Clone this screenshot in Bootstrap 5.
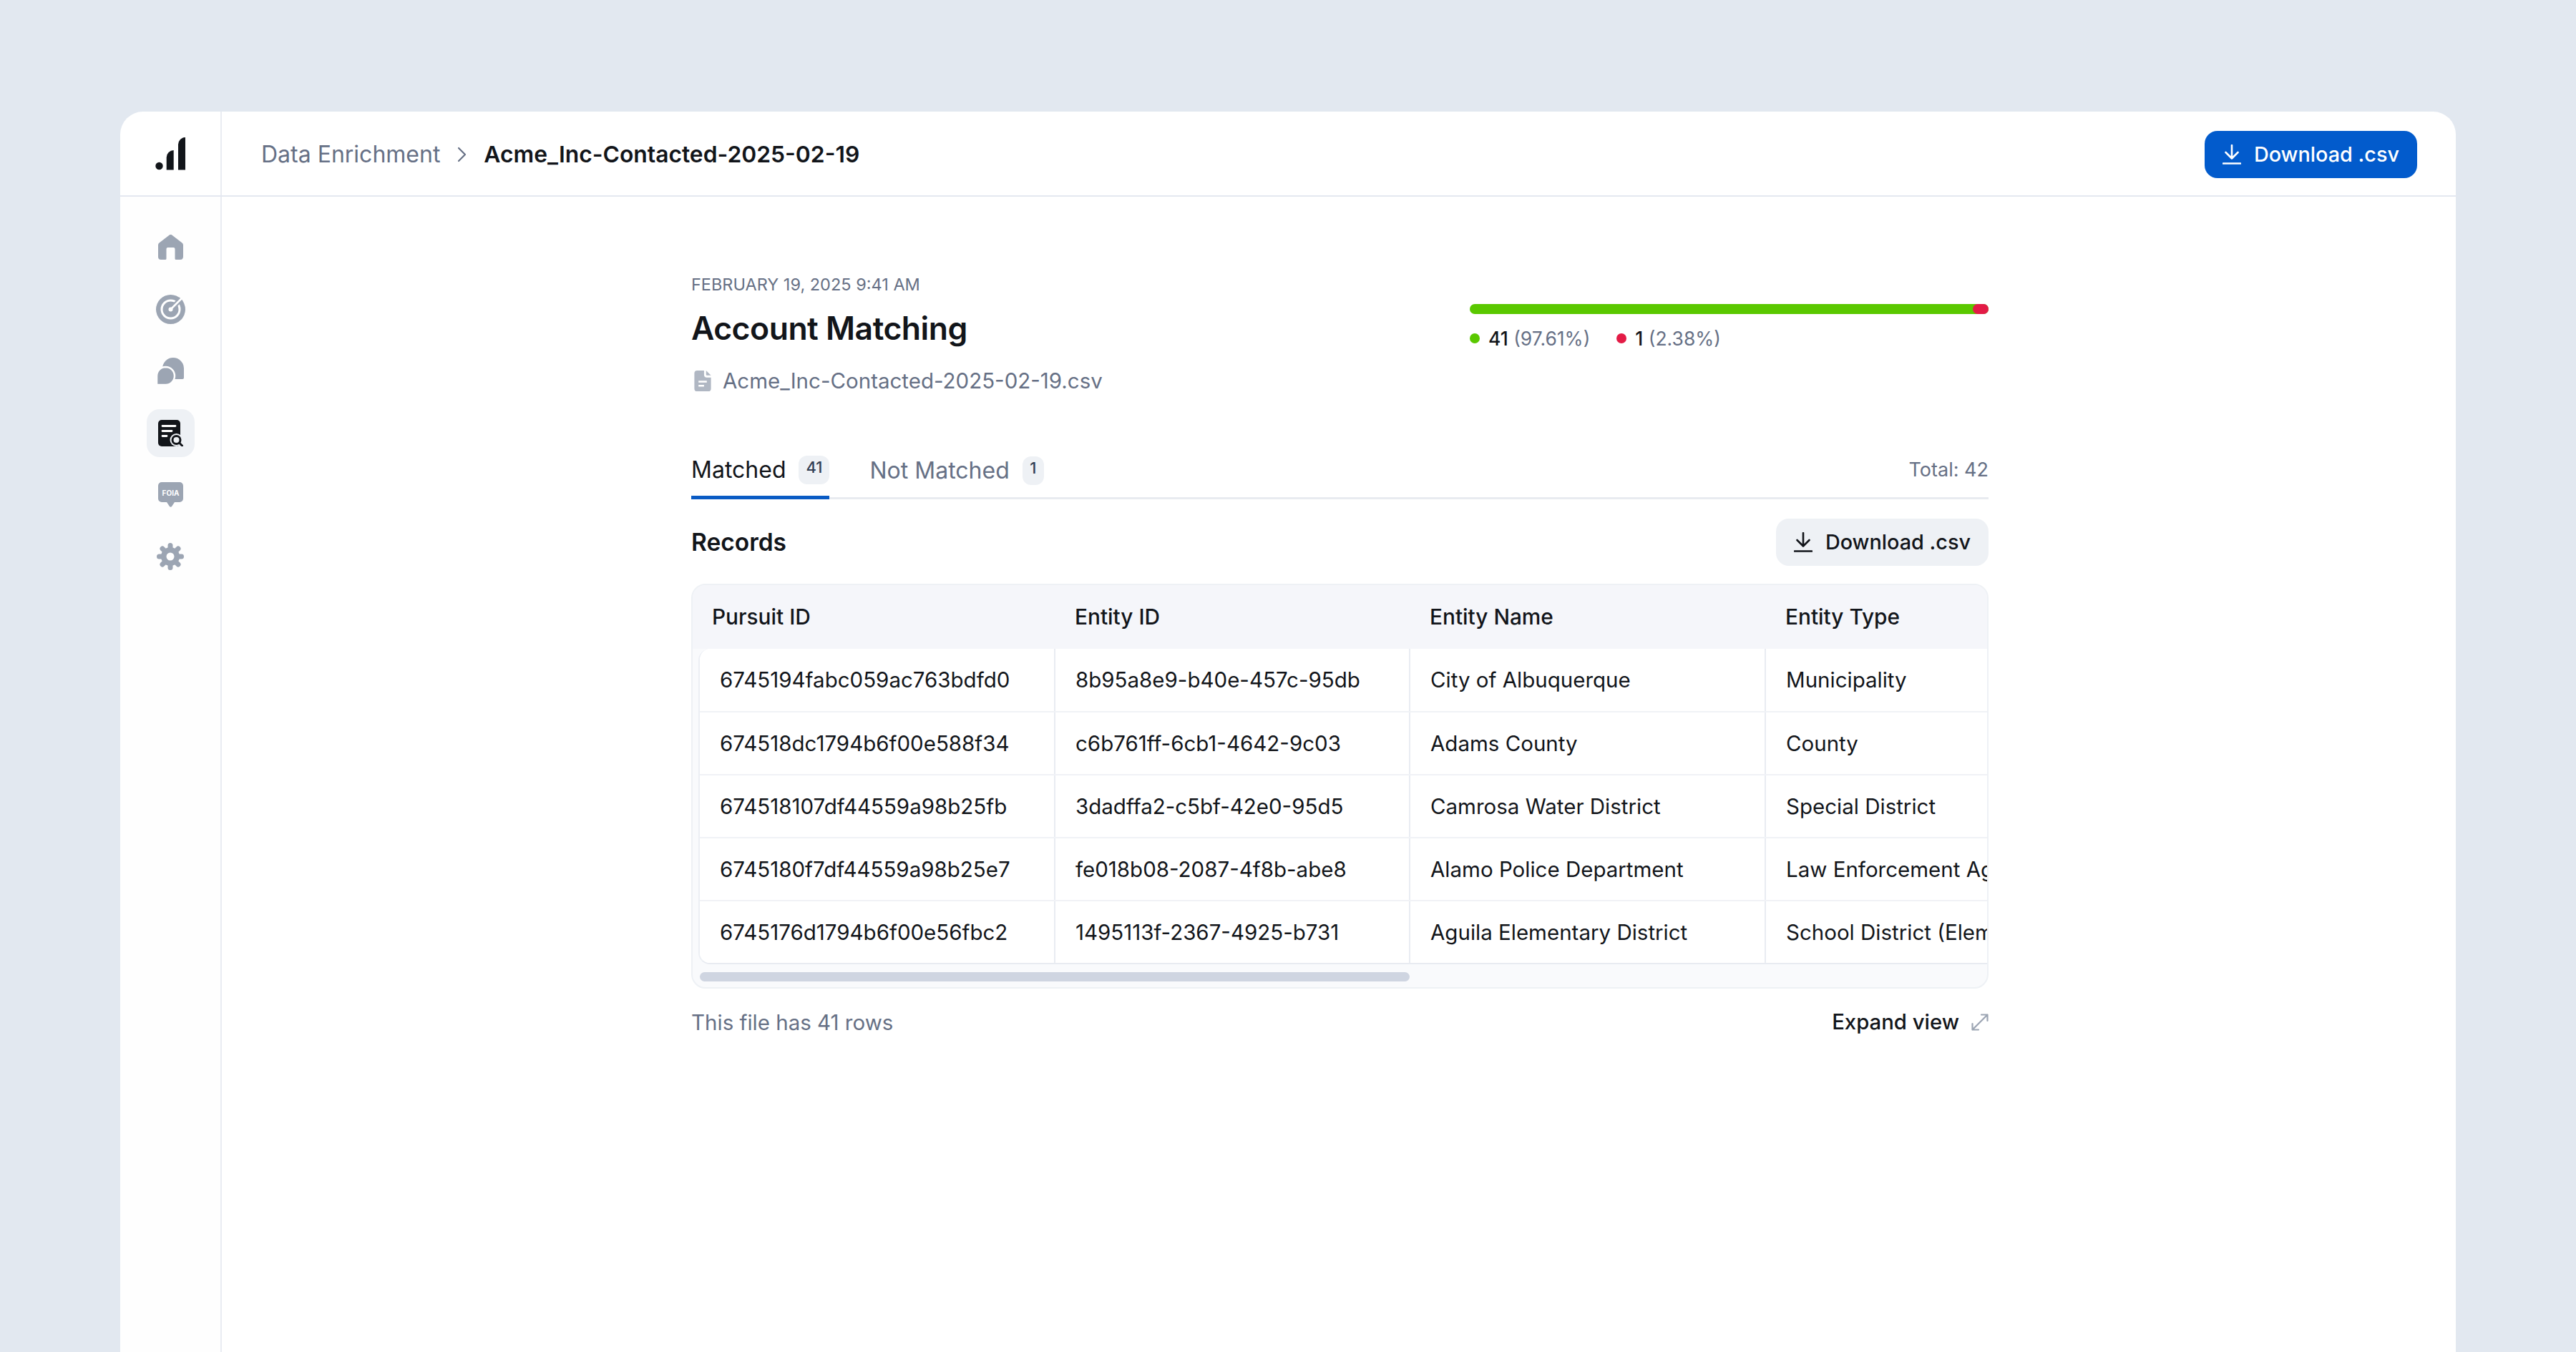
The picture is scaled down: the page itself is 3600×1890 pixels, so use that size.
<!doctype html>
<html lang="en">
<head>
<meta charset="utf-8">
<title>Account Matching</title>
<link href="https://cdn.jsdelivr.net/npm/bootstrap@5.3.0/dist/css/bootstrap.min.css" rel="stylesheet">
<style>
html,body{height:100%;overflow:hidden}
body{background:#e2e8f0;font-family:"Inter","Liberation Sans",sans-serif;font-size:29.5px;color:#12151a;padding:156px 168px 0}
.shell{background:#fff;border-radius:32px 32px 0 0;height:1734px;overflow:hidden}
.topbar{height:119px;border-bottom:2px solid #e4e8f0}
.logo-cell{width:142px;border-right:2px solid #e9ecf2}
.crumbs{padding:3px 54px 0 55px;font-size:32px}
.crumb-muted{color:#667085;font-weight:400}
.crumb-cur{font-weight:600;color:#12151a;font-size:31.800px}
.crumb-chev{margin:0 24px}
.btn-dl{height:66px;padding:0 25px;border-radius:18px;font-size:28.800px;font-weight:500;display:inline-flex;align-items:center;gap:18px;border:0}
.btn-pri{background:#025bcc;color:#fff}
.btn-pri:hover{background:#025bcc;color:#fff}
.btn-sec{background:#eef1f5;color:#12151a}
.side{width:142px;border-right:2px solid #e9ecf2;padding-top:37px;gap:19.6px;background:#fefefe}
.side-btn{width:67px;height:67px;border-radius:18px}
.side-on{background:#eef1f5}
.pane{width:1813px;padding-top:108px;margin-left:3px}
.eyebrow{font-size:23.5px;color:#667085;line-height:30px;letter-spacing:0}
.title{font-size:44.5px;font-weight:600;line-height:56px;margin:18px 0 0;letter-spacing:-.5px}
.fileline{color:#667085;gap:16px;margin-top:25px;line-height:40px}
.bar-wrap{width:725px;padding-top:42px}
.seg-bar{height:14px;background:#5ac800;border-radius:7px}
.seg-red{width:22px;background:#e31b46;border-radius:7px}
.legend{font-size:26.500px;margin-top:17px;gap:37px;line-height:34px}
.legend .fw-medium{font-weight:500}
.dot{width:14px;height:14px;border-radius:50%}
.dot-g{background:#5ac800}
.dot-r{background:#e31b46}
.dim{color:#667085}
.tabbar{margin-top:74px;height:72px;border-bottom:3px solid #e8ebf0;font-size:32px}
.tab-item{height:72px;margin-right:56px;color:#667085;margin-bottom:-3px;padding-bottom:8px;gap:18px}
.tab-on{color:#12151a;border-bottom:5px solid #0a5bc4;padding-bottom:6px}
.pill-n{background:#eef1f5;border-radius:12px;font-size:22px;font-weight:500;color:#344054;height:40px;min-width:30px;padding:0 10px 7px;display:flex;align-items:center;justify-content:center}
.tot{font-size:27px;color:#667085;padding-bottom:6px}
.rec-head{margin-top:26px;height:68px}
.rec-title{font-size:33.500px;font-weight:600}
.tbl-box{margin-top:24px;height:566px;background:#f9fafc;border:2px solid #eef1f5;border-radius:20px;overflow:hidden}
.tbl-head{background:#f5f6fa;height:89px}
.hcell{font-weight:500;padding-left:27px;flex:none;font-size:29.8px}
.tb-body{margin-left:8px;border-left:2px solid #eceff4;border-bottom:2px solid #e8ebf1;background:#fff;border-radius:16px 0 0 16px;overflow:hidden;height:441px}
.tb-body .table{margin:0;width:2400px;table-layout:fixed;--bs-table-bg:#fff;--bs-table-color:#12151a}
.tb-body td{font-size:29.5px;height:88px;padding:0 28px;vertical-align:middle;white-space:nowrap;border-bottom:2px solid #f0f2f6;border-right:2px solid #e9ecf2;overflow:hidden}
.tb-body tr:last-child td{border-bottom:0}
.w-a{width:496px}
.w-b{width:496px}
.w-c{width:497px}
.w-d{width:911px}
.h-a{width:507px}
.scroll-track{padding:11px 0 0 10px}
.scroll-thumb{width:992px;height:13px;border-radius:7px;background:#cfd5e1}
.foot{margin-top:20px;line-height:54px}
.expand{font-weight:500;gap:17px;font-size:29.3px}
.foot-left{color:#667085}
</style>
</head>
<body>
<div class="shell d-flex flex-column">
  <header class="topbar d-flex align-items-stretch flex-shrink-0">
    <div class="logo-cell d-flex align-items-center justify-content-center">
      <svg width="42" height="46" viewBox="0 0 42 46" fill="#12151a"><circle cx="5.500" cy="40" r="5.200"/><path d="M15.700 45.500V28a10 10 0 0 1 10-10v27.500z"/><path d="M32 45.500V10A10 10 0 0 1 42 0v45.500z"/></svg>
    </div>
    <div class="crumbs flex-grow-1 d-flex align-items-center justify-content-between">
      <div class="d-flex align-items-center">
        <span class="crumb-muted">Data Enrichment</span>
        <svg class="crumb-chev" width="13" height="22" viewBox="0 0 13 22" fill="none" stroke="#667085" stroke-width="2.200" stroke-linecap="round" stroke-linejoin="round"><path d="M2 2l9 9-9 9"/></svg>
        <span class="crumb-cur">Acme_Inc-Contacted-2025-02-19</span>
      </div>
      <button type="button" class="btn btn-dl btn-pri">
        <svg width="26" height="28" viewBox="0 0 26 28" fill="none" stroke="currentColor" stroke-width="2.600" stroke-linecap="round" stroke-linejoin="round"><path d="M13 1v18M4.500 11l8.500 8.500L21.500 11M1 26.500h24"/></svg>
        Download .csv
      </button>
    </div>
  </header>
  <div class="d-flex flex-grow-1">
    <nav class="side d-flex flex-column align-items-center flex-shrink-0">
      <a class="side-btn d-flex align-items-center justify-content-center" href="#" aria-label="Home">
        <svg width="35" height="35" viewBox="0 0 35 35" fill="#9ca5b3"><path d="M15.800.6a2.500 2.500 0 0 1 3.400 0L33.500 11.500a4 4 0 0 1 1.500 3V31a4 4 0 0 1-4 4H25a1.500 1.500 0 0 1-1.500-1.500V20a2 2 0 0 0-2-2H13.500a2 2 0 0 0-2 2V33.500A1.500 1.500 0 0 1 10 35H4a4 4 0 0 1-4-4V14.500a4 4 0 0 1 1.500-3z"/></svg>
      </a>
      <a class="side-btn d-flex align-items-center justify-content-center" href="#" aria-label="Radar">
        <svg width="41" height="41" viewBox="0 0 41 41" fill="none"><circle cx="20.500" cy="20.500" r="20.500" fill="#9ca5b3"/><circle cx="20.500" cy="20.500" r="12.500" stroke="#fff" stroke-width="3"/><path d="M20.500 20.500L35 6" stroke="#9ca5b3" stroke-width="7"/><path d="M20.500 20.500L35 6" stroke="#fff" stroke-width="2.600" stroke-linecap="round"/><circle cx="20.500" cy="20.500" r="3" fill="#fff"/></svg>
      </a>
      <a class="side-btn d-flex align-items-center justify-content-center" href="#" aria-label="Chat">
        <svg width="38" height="38" viewBox="0 0 38 38" fill="#9ca5b3"><path d="M23 0a15 15 0 0 1 15 15v13a2 2 0 0 1-2 2H23A15 15 0 0 1 23 0z"/><path d="M12.500 14a12.500 12.500 0 0 1 0 25H1.500a1.500 1.500 0 0 1-1.500-1.500V26.500A12.500 12.500 0 0 1 12.500 14z" stroke="#fff" stroke-width="2.500" transform="translate(0 -1)"/></svg>
      </a>
      <a class="side-btn side-on d-flex align-items-center justify-content-center" href="#" aria-label="Enrichment">
        <svg width="35" height="37" viewBox="0 0 35 37" fill="none"><rect width="31" height="37" rx="5" fill="#12151a"/><path d="M6 8.500h18M6 15.500h13M6 22.500h6" stroke="#fff" stroke-width="2.800" stroke-linecap="round"/><circle cx="25.500" cy="28" r="9" fill="#eef1f5"/><circle cx="25.500" cy="28" r="5.500" fill="#eef1f5" stroke="#12151a" stroke-width="3"/><path d="M29.500 32l4.500 4.500" stroke="#12151a" stroke-width="3" stroke-linecap="round"/></svg>
      </a>
      <a class="side-btn d-flex align-items-center justify-content-center" href="#" aria-label="FOIA">
        <svg width="35" height="35" viewBox="0 0 35 35"><path d="M5 0h25a5 5 0 0 1 5 5v18a5 5 0 0 1-5 5h-7l-4 6a1.800 1.800 0 0 1-3 0l-4-6H5a5 5 0 0 1-5-5V5a5 5 0 0 1 5-5z" fill="#9ca5b3"/><text x="17.500" y="18.500" text-anchor="middle" font-family="Inter,sans-serif" font-size="10" font-weight="700" fill="#fff">FOIA</text></svg>
      </a>
      <a class="side-btn d-flex align-items-center justify-content-center" href="#" aria-label="Settings">
        <svg width="38" height="38" viewBox="0 0 38 38" fill="none"><g stroke="#9ca5b3" stroke-width="7" stroke-linecap="round"><path d="M19 3.500v31M3.500 19h31M8 8l22 22M30 8L8 30"/></g><circle cx="19" cy="19" r="13" fill="#9ca5b3"/><circle cx="19" cy="19" r="5.500" fill="#fff"/></svg>
      </a>
    </nav>
    <main class="flex-grow-1 d-flex justify-content-center">
      <div class="pane">
        <div class="d-flex justify-content-between">
          <div>
            <div class="eyebrow text-uppercase">February 19, 2025 9:41 AM</div>
            <h1 class="title">Account Matching</h1>
            <div class="fileline d-flex align-items-center">
              <svg class="ms-1" width="24" height="29" viewBox="0 0 24 30" fill="#b0b7c3"><path d="M4 0h10v6a4 4 0 0 0 4 4h6v16a4 4 0 0 1-4 4H4a4 4 0 0 1-4-4V4a4 4 0 0 1 4-4z"/><path d="M17 0l7 7h-6a1 1 0 0 1-1-1z"/><path d="M6 16h12M6 22h8" stroke="#fff" stroke-width="2.500"/></svg>
              <span>Acme_Inc-Contacted-2025-02-19.csv</span>
            </div>
          </div>
          <div class="bar-wrap">
            <div class="seg-bar d-flex justify-content-end"><div class="seg-red"></div></div>
            <div class="legend d-flex">
              <div class="d-flex align-items-center gap-2"><span class="dot dot-g me-1"></span><span><span class="fw-medium">41</span> <span class="dim">(97.61%)</span></span></div>
              <div class="d-flex align-items-center gap-2"><span class="dot dot-r me-1"></span><span><span class="fw-medium">1</span> <span class="dim">(2.38%)</span></span></div>
            </div>
          </div>
        </div>
        <div class="tabbar d-flex align-items-end">
          <div class="tab-item tab-on d-flex align-items-center">Matched <span class="pill-n">41</span></div>
          <div class="tab-item d-flex align-items-center">Not Matched <span class="pill-n">1</span></div>
          <div class="tot ms-auto align-self-center">Total: 42</div>
        </div>
        <div class="rec-head d-flex align-items-center justify-content-between">
          <div class="rec-title">Records</div>
          <button type="button" class="btn btn-dl btn-sec">
            <svg width="26" height="28" viewBox="0 0 26 28" fill="none" stroke="currentColor" stroke-width="2.600" stroke-linecap="round" stroke-linejoin="round"><path d="M13 1v18M4.500 11l8.500 8.500L21.500 11M1 26.500h24"/></svg>
            Download .csv
          </button>
        </div>
        <div class="tbl-box">
          <div class="tbl-head d-flex align-items-center">
            <div class="hcell h-a">Pursuit ID</div>
            <div class="hcell w-b">Entity ID</div>
            <div class="hcell w-c">Entity Name</div>
            <div class="hcell w-d">Entity Type</div>
          </div>
          <div class="tb-body">
            <table class="table">
              <colgroup><col class="w-a"><col class="w-b"><col class="w-c"><col class="w-d"></colgroup>
              <tbody>
                <tr><td>6745194fabc059ac763bdfd0</td><td>8b95a8e9-b40e-457c-95db</td><td>City of Albuquerque</td><td>Municipality</td></tr>
                <tr><td>674518dc1794b6f00e588f34</td><td>c6b761ff-6cb1-4642-9c03</td><td>Adams County</td><td>County</td></tr>
                <tr><td>674518107df44559a98b25fb</td><td>3dadffa2-c5bf-42e0-95d5</td><td>Camrosa Water District</td><td>Special District</td></tr>
                <tr><td>6745180f7df44559a98b25e7</td><td>fe018b08-2087-4f8b-abe8</td><td>Alamo Police Department</td><td>Law Enforcement Agency</td></tr>
                <tr><td>6745176d1794b6f00e56fbc2</td><td>1495113f-2367-4925-b731</td><td>Aguila Elementary District</td><td>School District (Elementary)</td></tr>
              </tbody>
            </table>
          </div>
          <div class="scroll-track"><div class="scroll-thumb"></div></div>
        </div>
        <div class="foot d-flex align-items-center justify-content-between">
          <div class="foot-left">This file has 41 rows</div>
          <div class="expand d-flex align-items-center">Expand view
            <svg width="24" height="24" viewBox="0 0 24 24" fill="none" stroke="#9ca5b3" stroke-width="2.200" stroke-linecap="round" stroke-linejoin="round"><path d="M1.500 22.500l21-21M14 1.500h8.500V10M1.500 14v8.500H10"/></svg>
          </div>
        </div>
      </div>
    </main>
  </div>
</div>
<script src="https://cdn.jsdelivr.net/npm/bootstrap@5.3.0/dist/js/bootstrap.bundle.min.js"></script>
</body>
</html>
